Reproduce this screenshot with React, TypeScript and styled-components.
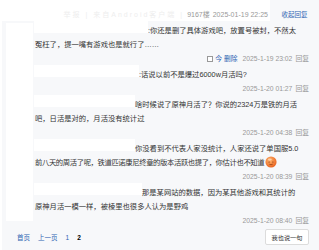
import React from 'react'
import styled, { createGlobalStyle } from 'styled-components'

const GlobalStyle = createGlobalStyle`
  html, body {
    margin: 0;
    padding: 0;
    background: #fff;
  }
  body {
    font-family: "Liberation Sans", "Noto Sans CJK SC", sans-serif;
    color: #333;
  }
`

const Page = styled.div`
  width: 319px;
  height: 250px;
  overflow: hidden;
  background: #fff;
`

const TopBar = styled.div`
  display: flex;
  justify-content: flex-end;
  height: 21px;
  font-size: 7px;
  line-height: 10px;
`

const FloorInfo = styled.div`
  display: flex;
  align-items: flex-end;
  gap: 3px;
  padding: 0 2px 1px 0;
  color: #999;
`

const Faded = styled.span`
  color: #eeeeee;
  letter-spacing: 2px;
`

const CollapseTab = styled.a`
  display: flex;
  align-items: flex-end;
  justify-content: center;
  width: 49px;
  padding-bottom: 1px;
  background: #f7f8fa;
  color: #2d64b3;
  font-size: 6.5px;
  cursor: pointer;
`

const Panel = styled.div`
  margin-left: 2px;
  height: 229px;
  padding: 2px 10px 0 4px;
  background: #f7f8fa;
`

const List = styled.ul`
  list-style: none;
  margin: 0;
  padding: 0;
`

const Item = styled.li`
  display: flex;
  &:last-child > div:first-child {
    margin-bottom: 8px;
  }
`

const Avatar = styled.div`
  flex: none;
  width: 27px;
  background: #fff;
`

const Body = styled.div`
  flex: 1;
  min-width: 0;
  padding: 1px 0 1px 2px;
  font-size: 7.3px;
  line-height: 14px;
`

const Line = styled.div<{ $tight?: boolean }>`
  white-space: nowrap;
  letter-spacing: ${p => (p.$tight ? '-0.35px' : '0')};
`

const Name = styled.span<{ $w: number }>`
  display: inline-block;
  width: ${p => p.$w}px;
  height: 12px;
  margin: -3px 0 0 -1px;
  vertical-align: top;
  background: #fff;
`

const Meta = styled.div`
  display: flex;
  justify-content: flex-end;
  align-items: center;
  gap: 3px;
  color: #999;
  font-size: 6.8px;
  line-height: 14px;
`

const Report = styled.span`
  display: inline-flex;
  align-items: center;
  gap: 2px;
  margin-right: 2px;
  color: #2d64b3;
`

const ReplyLink = styled.a`
  color: #999;
  cursor: pointer;
`

const Emoji = styled.svg`
  width: 12px;
  height: 12px;
  margin-left: 1px;
  vertical-align: -3px;
`

const Footer = styled.div`
  display: flex;
  align-items: center;
  justify-content: space-between;
  height: 16px;
  padding-left: 11px;
`

const Pager = styled.div`
  display: flex;
  align-items: center;
  gap: 8px;
  font-size: 6.5px;
`

const PageLink = styled.a<{ $current?: boolean }>`
  color: ${p => (p.$current ? '#000' : '#2d64b3')};
  font-weight: ${p => (p.$current ? 700 : 400)};
  cursor: pointer;
`

const SayButton = styled.button`
  width: 44px;
  height: 16px;
  padding: 0;
  border: 1px solid #dcdcdc;
  border-radius: 2px;
  background: #fff;
  color: #333;
  font-family: inherit;
  font-size: 6.2px;
`

const Smile = () => (
  <Emoji viewBox="0 0 14 14">
    <defs>
      <radialGradient id="sm" cx="40%" cy="35%" r="70%">
        <stop offset="0" stopColor="#ffb36b" />
        <stop offset="1" stopColor="#e8601c" />
      </radialGradient>
    </defs>
    <circle cx="7" cy="7" r="6.5" fill="url(#sm)" />
    <ellipse cx="5.6" cy="4" rx="2.4" ry="1.2" fill="#fff" opacity=".45" />
    <circle cx="4.8" cy="7" r=".7" fill="#7a2c08" />
    <circle cx="9.2" cy="7" r=".7" fill="#7a2c08" />
    <path d="M5 9.6 Q7 10.8 9 9.6" stroke="#7a2c08" strokeWidth=".7" fill="none" />
  </Emoji>
)

type Reply = {
  name: number
  lines: React.ReactNode[]
  time: string
  report?: boolean
  tight?: number
}

const replies: Reply[] = [
  {
    name: 114,
    lines: [':你还是删了具体游戏吧，放置号被封，不然太', '冤枉了，提一嘴有游戏也是就行了……'],
    time: '2025-1-19 23:02',
    report: true,
  },
  { name: 105, lines: [':话说以前不是爆过6000w月活吗?'], time: '2025-1-20 01:27' },
  {
    name: 101,
    lines: ['啥时候说了原神月活了？你说的2324万是铁的月活', '吧，日活是对的，月活没有统计过'],
    time: '2025-1-20 04:38',
  },
  {
    name: 101,
    lines: [
      '你没看到不代表人家没统计，人家还说了单国服5.0',
      <>前八天的周活了呢，铁道匹诺康尼终章的版本活跃也提了，你估计也不知道<Smile /></>,
    ],
    time: '2025-1-20 08:39',
    tight: 1,
  },
  {
    name: 108,
    lines: ['那是某网站的数据，因为某其他游戏和其统计的', '原神月活一模一样，被棱里也很多人认为是野鸡'],
    time: '2025-1-20 08:40',
  },
]

export default function App() {
  return (
    <Page>
      <GlobalStyle />
      <TopBar>
        <FloorInfo>
          <Faded>举报 | 来自Android客户端 |</Faded>
          <span>9167楼</span>
          <span>2025-01-19 22:25</span>
        </FloorInfo>
        <CollapseTab>收起回复</CollapseTab>
      </TopBar>
      <Panel>
        <List>
          {replies.map((r, i) => (
            <Item key={i}>
              <Avatar />
              <Body>
                {r.lines.map((l, j) => (
                  <Line key={j} $tight={r.tight === j}>
                    {j === 0 && <Name $w={r.name} />}
                    {l}
                  </Line>
                ))}
                <Meta>
                  {r.report && (
                    <Report>
                      <svg width="6" height="6" viewBox="0 0 6 6">
                        <rect x=".5" y=".5" width="5" height="5" fill="#fff" stroke="#999" />
                      </svg>
                      今 删除
                    </Report>
                  )}
                  <span>{r.time}</span>
                  <ReplyLink>回复</ReplyLink>
                </Meta>
              </Body>
            </Item>
          ))}
        </List>
        <Footer>
          <Pager>
            <PageLink>首页</PageLink>
            <PageLink>上一页</PageLink>
            <PageLink>1</PageLink>
            <PageLink $current>2</PageLink>
          </Pager>
          <SayButton>我也说一句</SayButton>
        </Footer>
      </Panel>
    </Page>
  )
}
